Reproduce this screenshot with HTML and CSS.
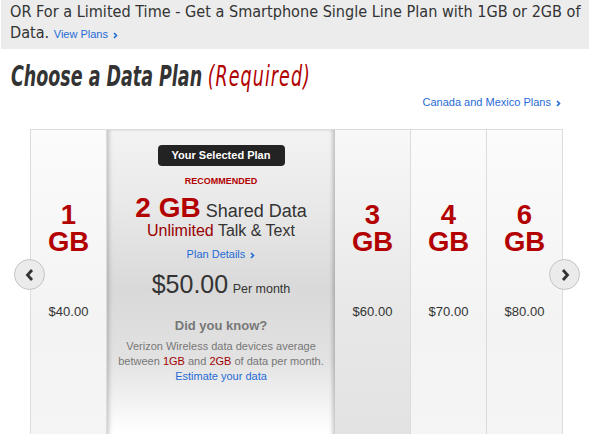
FILE: index.html
```html
<!DOCTYPE html>
<html>
<head>
<meta charset="utf-8">
<link rel="stylesheet" href="styles.css">
</head>
<body>
<div class="promo">OR For a Limited Time - Get a Smartphone Single Line Plan with 1GB or 2GB of Data. <a class="link small">View Plans <svg class="chev" width="5" height="7" viewBox="0 0 5 7"><path d="M1 1 L3.5 3.5 L1 6" fill="none" stroke="#1f6bd6" stroke-width="1.6"/></svg></a></div>
<h1 class="title"><b>Choose a Data Plan</b> <span class="req">(Required)</span></h1>
<div class="intl"><a class="link small">Canada and Mexico Plans <svg class="chev" width="5" height="7" viewBox="0 0 5 7"><path d="M1 1 L3.5 3.5 L1 6" fill="none" stroke="#1f6bd6" stroke-width="1.6"/></svg></a></div>
<div class="carousel">
  <div class="cards">
    <div class="card">
      <div class="gb">1</div><div class="gb">GB</div>
      <div class="price">$40.00</div>
    </div>
    <div class="card selected">
      <div class="badge">Your Selected Plan</div>
      <div class="rec">RECOMMENDED</div>
      <div class="big"><span class="bignum">2 GB</span> Shared Data</div>
      <div class="unl"><span class="dred">Unlimited</span> Talk &amp; Text</div>
      <a class="link small details">Plan Details <svg class="chev" width="5" height="7" viewBox="0 0 5 7"><path d="M1 1 L3.5 3.5 L1 6" fill="none" stroke="#1f6bd6" stroke-width="1.6"/></svg></a>
      <div class="cost"><span class="amt">$50.00</span> <span class="per">Per month</span></div>
      <div class="dyk">Did you know?</div>
      <p class="info">Verizon Wireless data devices average<br>between <span class="dred">1GB</span> and <span class="dred">2GB</span> of data per month.<br><a class="link">Estimate your data</a></p>
    </div>
    <div class="card hover">
      <div class="gb">3</div><div class="gb">GB</div>
      <div class="price">$60.00</div>
    </div>
    <div class="card">
      <div class="gb">4</div><div class="gb">GB</div>
      <div class="price">$70.00</div>
    </div>
    <div class="card">
      <div class="gb">6</div><div class="gb">GB</div>
      <div class="price">$80.00</div>
    </div>
  </div>
  <div class="arrow left"><svg width="12" height="14" viewBox="0 0 12 14"><path d="M8 2 L3.5 7 L8 12" fill="none" stroke="#333" stroke-width="2.8"/></svg></div>
  <div class="arrow right"><svg width="12" height="14" viewBox="0 0 12 14"><path d="M4 2 L8.5 7 L4 12" fill="none" stroke="#333" stroke-width="2.8"/></svg></div>
</div>
</body>
</html>
```
FILE: styles.css
```css
html, body { margin: 0; padding: 0; background: #fff; overflow: hidden; }
body { font-family: "Liberation Sans", Arial, sans-serif; color: #333; width: 589px; height: 434px; }
.promo {
  margin-left: 1px;
  background: #ececec;
  height: 49px;
  box-sizing: border-box;
  padding: 1px 4px 0 9px;
  font-family: "DejaVu Sans Condensed", sans-serif;
  font-size: 16.1px;
  line-height: 21px;
  color: #333;
}
.link { color: #1f6bd6; text-decoration: none; font-family: "Liberation Sans", Arial, sans-serif; }
.promo .link { line-height: 14px; }
.small { font-size: 11px; }
.chev { margin-left: 2px; vertical-align: -1px; }
.title {
  margin: 12px 0 0 11px;
  font-family: "DejaVu Sans Condensed", sans-serif;
  font-style: italic;
  font-size: 29px;
  line-height: 30px;
  font-weight: normal;
  color: #333;
  white-space: nowrap;
  transform: scaleX(0.67);
  transform-origin: 0 0;
}
.title b { font-weight: bold; }
.req { color: #b00000; letter-spacing: 1.6px; }
.intl { text-align: right; padding-right: 28px; margin-top: 3px; line-height: 14px; }
.carousel { position: relative; margin: 20px 0 0 30px; width: 533px; height: 320px; }
.cards {
  display: flex;
  height: 100%;
  border-top: 1px solid #dcdcdc;
  border-left: 1px solid #dcdcdc;
  box-sizing: border-box;
}
.card {
  width: 76px;
  flex: none;
  box-sizing: border-box;
  border-right: 1px solid #dcdcdc;
  background: linear-gradient(#fbfbfb, #f3f3f3 60%, #f5f5f5);
  display: flex;
  flex-direction: column;
  align-items: center;
  text-align: center;
  padding-top: 71px;
}
.card.hover { background: linear-gradient(#f8f8f8, #e8e8e8 55%, #e2e2e2); }
.gb { color: #b30000; font-weight: bold; font-size: 27.5px; line-height: 27px; }
.price { margin-top: 49px; font-size: 13px; color: #333; }
.card.selected {
  width: 228px;
  border-right: none;
  padding-top: 15px;
  background: linear-gradient(#f3f3f3, #e8e8e8 25%, #d9d9d9 50%, #e2e2e2 72%, #ffffff 95%);
  box-shadow: inset 4px 0 4px -2px rgba(0,0,0,0.2), inset -4px 0 4px -2px rgba(0,0,0,0.24);
}
.badge {
  background: #232323;
  color: #fff;
  font-weight: bold;
  font-size: 11px;
  line-height: 21px;
  width: 127px;
  border-radius: 4px;
}
.rec { color: #b30000; font-weight: bold; font-size: 9px; margin-top: 9px; line-height: 12px; }
.big { font-size: 18px; margin-top: 9px; line-height: 23px; color: #333; }
.bignum { color: #b30000; font-weight: bold; font-size: 28px; }
.unl { font-size: 16px; line-height: 16px; color: #333; }
.dred { color: #990000; }
.details { margin-top: 8px; line-height: 14px; }
.cost { margin-top: 8px; line-height: 30px; }
.amt { font-size: 25px; color: #333; }
.per { font-size: 12.5px; color: #333; }
.dyk { font-weight: bold; font-size: 13px; color: #777; margin-top: 14px; line-height: 16px; }
.info { margin: 5px 0 0; font-size: 11px; line-height: 15px; color: #777; width: 225px; }
.info .dred { color: #a00000; }
.arrow {
  position: absolute;
  top: 130px;
  width: 29px;
  height: 29px;
  border-radius: 50%;
  border: 1px solid #c4c4c4;
  background: #ebebeb;
  display: flex;
  align-items: center;
  justify-content: center;
}
.arrow.left { left: -16px; }
.arrow.right { left: 519px; }
```
